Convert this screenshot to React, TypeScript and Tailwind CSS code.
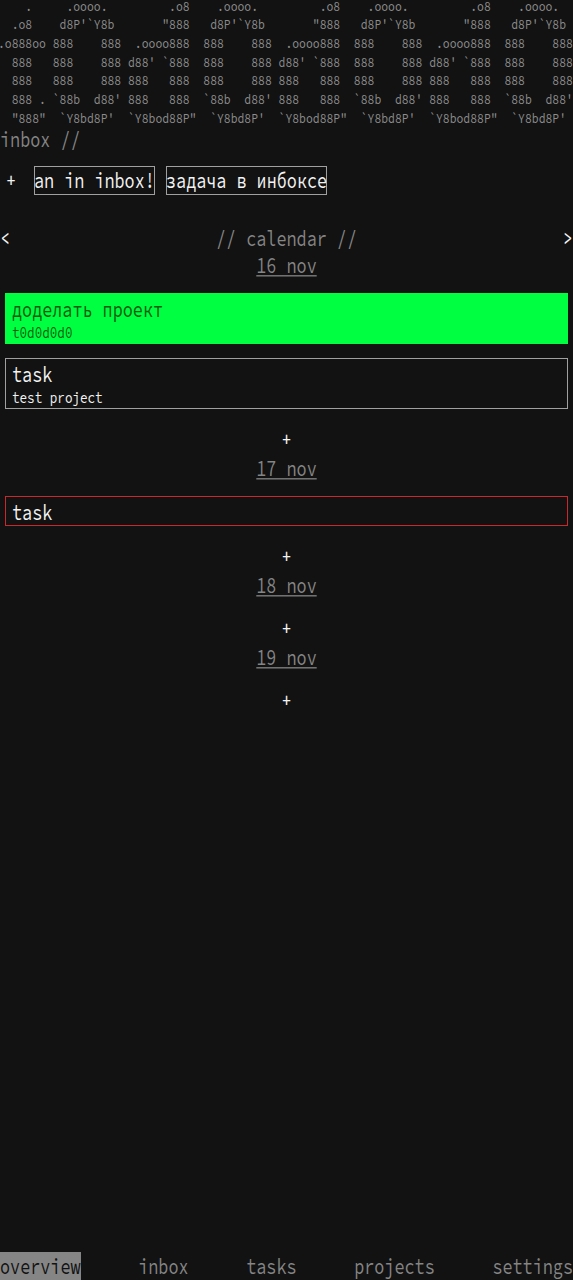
import type { ReactNode } from 'react';

const tee = [
  '    .   ',
  '  .o8   ',
  '.o888oo ',
  '  888   ',
  '  888   ',
  '  888 . ',
  '  "888" ',
];
const zero = [
  '  .oooo.   ',
  " d8P'`Y8b  ",
  '888    888 ',
  '888    888 ',
  '888    888 ',
  "`88b  d88' ",
  " `Y8bd8P'  ",
];
const dee = [
  '      .o8  ',
  '     "888  ',
  ' .oooo888  ',
  "d88' `888  ",
  '888   888  ',
  '888   888  ',
  '`Y8bod88P" ',
];
const art = tee.map((row, i) => (row + (zero[i] + dee[i]).repeat(3) + zero[i]).trimEnd()).join('\n');

function Stretch({ children, className = 'scale-y-[1.29]' }: { children: ReactNode; className?: string }) {
  return <span className={`inline-block whitespace-pre ${className}`}>{children}</span>;
}

function Plus() {
  return (
    <button className="block h-[30px] w-full text-center leading-[27px]">
      <Stretch className="scale-y-[1.15] font-medium">+</Stretch>
    </button>
  );
}

function DateLabel({ children }: { children: string }) {
  return (
    <h2 className="h-[28px] text-center leading-[29px] text-[#858585]">
      <Stretch className="scale-y-[1.29] underline decoration-1 underline-offset-2">{children}</Stretch>
    </h2>
  );
}

function Task({ title, project, tone }: { title: string; project?: string; tone: string }) {
  return (
    <div className={`mx-[5px] border px-[6px] ${tone} ${project ? 'h-[51px]' : 'h-[30px]'}`}>
      <div className="h-[30px] leading-[30px]">
        <Stretch>{title}</Stretch>
      </div>
      {project && (
        <div className="h-[19px] text-[12.6px] leading-[18px]">
          <Stretch>{project}</Stretch>
        </div>
      )}
    </div>
  );
}

const tabs = ['overview', 'inbox', 'tasks', 'projects', 'settings'];

export default function App() {
  return (
    <div className="flex h-[1280px] w-[573px] flex-col overflow-hidden bg-[#121212] font-['Source_Code_Pro','Liberation_Mono',monospace] text-[16.8px] leading-[28px] text-[#f4f4f4]">
      <header className="h-[125px] shrink-0 overflow-hidden">
        <pre className="-mt-[3px] -ml-[2px] origin-top scale-y-[1.245] font-['Source_Code_Pro','Liberation_Mono',monospace] text-[11.42px] leading-[15px] text-[#8c8c8c]">
          {art}
        </pre>
      </header>
      <h1 className="h-[28px] shrink-0 text-[#858585]">
        <Stretch>inbox //</Stretch>
      </h1>
      <div className="mt-[13px] flex h-[30px] shrink-0 items-start">
        <button className="w-[34px] pl-[6px] text-left">
          <Stretch className="scale-y-[1.15] font-medium">+</Stretch>
        </button>
        <div className="flex gap-[11px]">
          <div className="h-[29px] w-[121px] border border-[#a0a0a0] leading-[27px]">
            <Stretch className="-ml-px scale-y-[1.29]">an in inbox!</Stretch>
          </div>
          <div className="h-[29px] w-[161px] border border-[#a0a0a0] leading-[27px]">
            <Stretch className="-ml-px scale-y-[1.29]">задача в инбоксе</Stretch>
          </div>
        </div>
      </div>
      <div className="mt-[28px] flex h-[27px] shrink-0 items-start justify-between">
        <button>
          <Stretch className="scale-y-[1.2] font-medium">{'<'}</Stretch>
        </button>
        <h1 className="text-[#858585]">
          <Stretch>// calendar //</Stretch>
        </h1>
        <button>
          <Stretch className="scale-y-[1.2] font-medium">{'>'}</Stretch>
        </button>
      </div>
      <main className="grow">
        <DateLabel>16 nov</DateLabel>
        <div className="mt-[14px] mb-[15px] flex flex-col gap-[14px]">
          <Task title="доделать проект" project="t0d0d0d0" tone="border-[#00ff40] bg-[#00ff40] text-[#085c10]" />
          <Task title="task" project="test project" tone="border-[#a0a0a0]" />
        </div>
        <Plus />
        <DateLabel>17 nov</DateLabel>
        <div className="mt-[14px] mb-[15px]">
          <Task title="task" tone="border-[#c8282e]" />
        </div>
        <Plus />
        <DateLabel>18 nov</DateLabel>
        <div className="mt-[14px]">
          <Plus />
        </div>
        <DateLabel>19 nov</DateLabel>
        <div className="mt-[14px]">
          <Plus />
        </div>
      </main>
      <nav className="flex h-[28px] shrink-0 justify-between text-[#858585]">
        {tabs.map((tab, i) => (
          <button key={tab} className={i === 0 ? 'bg-[#858585] text-[#121212]' : ''}>
            <Stretch>{tab}</Stretch>
          </button>
        ))}
      </nav>
    </div>
  );
}
